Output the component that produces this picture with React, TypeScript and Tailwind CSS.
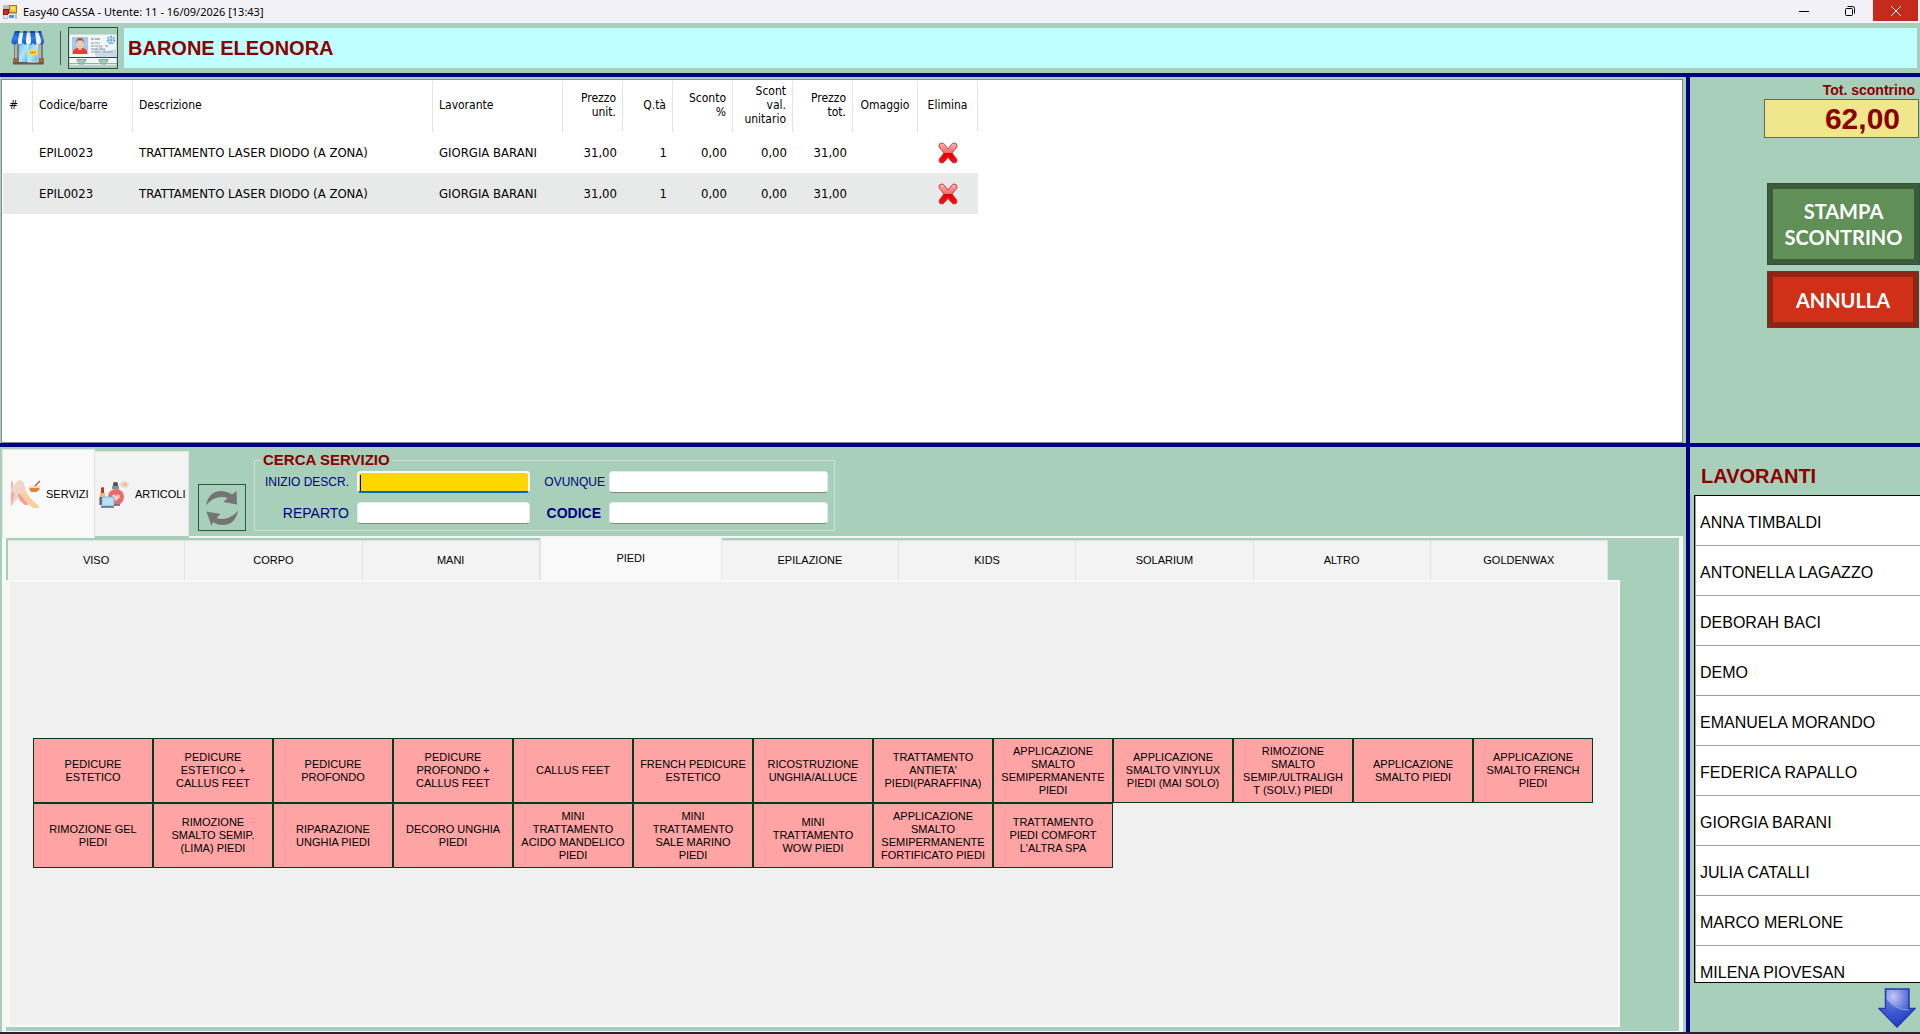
import { useId } from "react";

const arial = "font-['Liberation_Sans',Arial,sans-serif]";
const tahoma = "font-['DejaVu_Sans_Condensed',Tahoma,sans-serif]";

const receipt = [
  { id: 1, code: "EPIL0023", description: "TRATTAMENTO LASER DIODO (A ZONA)", worker: "GIORGIA BARANI", price: "31,00", qty: "1", discount: "0,00", unitDiscount: "0,00", total: "31,00" },
  { id: 2, code: "EPIL0023", description: "TRATTAMENTO LASER DIODO (A ZONA)", worker: "GIORGIA BARANI", price: "31,00", qty: "1", discount: "0,00", unitDiscount: "0,00", total: "31,00" },
];

const categories = ["VISO", "CORPO", "MANI", "PIEDI", "EPILAZIONE", "KIDS", "SOLARIUM", "ALTRO", "GOLDENWAX"];

const services = [
  "PEDICURE\nESTETICO",
  "PEDICURE\nESTETICO +\nCALLUS FEET",
  "PEDICURE\nPROFONDO",
  "PEDICURE\nPROFONDO +\nCALLUS FEET",
  "CALLUS FEET",
  "FRENCH PEDICURE\nESTETICO",
  "RICOSTRUZIONE\nUNGHIA/ALLUCE",
  "TRATTAMENTO\nANTIETA'\nPIEDI(PARAFFINA)",
  "APPLICAZIONE\nSMALTO\nSEMIPERMANENTE\nPIEDI",
  "APPLICAZIONE\nSMALTO VINYLUX\nPIEDI (MAI SOLO)",
  "RIMOZIONE\nSMALTO\nSEMIP./ULTRALIGH\nT (SOLV.) PIEDI",
  "APPLICAZIONE\nSMALTO PIEDI",
  "APPLICAZIONE\nSMALTO FRENCH\nPIEDI",
  "RIMOZIONE GEL\nPIEDI",
  "RIMOZIONE\nSMALTO SEMIP.\n(LIMA) PIEDI",
  "RIPARAZIONE\nUNGHIA PIEDI",
  "DECORO UNGHIA\nPIEDI",
  "MINI\nTRATTAMENTO\nACIDO MANDELICO\nPIEDI",
  "MINI\nTRATTAMENTO\nSALE MARINO\nPIEDI",
  "MINI\nTRATTAMENTO\nWOW PIEDI",
  "APPLICAZIONE\nSMALTO\nSEMIPERMANENTE\nFORTIFICATO PIEDI",
  "TRATTAMENTO\nPIEDI COMFORT\nL'ALTRA SPA",
];

const workers = [
  "ANNA TIMBALDI",
  "ANTONELLA LAGAZZO",
  "DEBORAH BACI",
  "DEMO",
  "EMANUELA MORANDO",
  "FEDERICA RAPALLO",
  "GIORGIA BARANI",
  "JULIA CATALLI",
  "MARCO MERLONE",
  "MILENA PIOVESAN",
];

function FormIcon() {
  return (
    <svg width="14" height="14" viewBox="0 0 14 14" aria-hidden="true">
      <rect width="14" height="14" fill="#b9bcc4" />
      <rect x="0.5" y="4.5" width="5" height="5" fill="#d8261c" stroke="#8f1510" />
      <rect x="6.5" y="0.5" width="7" height="7" fill="#f9c62c" stroke="#a8791a" />
      <rect x="8" y="2" width="4" height="2.5" fill="#ffe890" />
      <rect x="5.5" y="9.5" width="6" height="4" fill="#4d8df0" stroke="#e8eefc" />
      <rect x="1" y="10" width="3.500" height="3" fill="#e8e8ee" />
    </svg>
  );
}

function ShopIcon() {
  return (
    <svg width="34" height="36" viewBox="0 0 34 36" aria-hidden="true">
      <defs>
        <linearGradient id="awning" x1="0" x2="0" y1="0" y2="1">
          <stop offset="0" stopColor="#1c4fb0" />
          <stop offset="0.55" stopColor="#2f7fe0" />
          <stop offset="1" stopColor="#1a56c4" />
        </linearGradient>
        <linearGradient id="glass" x1="0" x2="1" y1="0" y2="1">
          <stop offset="0" stopColor="#5fc0ee" />
          <stop offset="0.5" stopColor="#b4e6fa" />
          <stop offset="1" stopColor="#55b4e6" />
        </linearGradient>
      </defs>
      <rect x="2" y="31" width="31" height="3.500" rx="1" fill="#6b5a48" />
      <rect x="3" y="12" width="5" height="20" fill="#7d7d7d" />
      <rect x="27" y="12" width="5" height="20" fill="#7d7d7d" />
      <rect x="4" y="13" width="2" height="18" fill="#b4b4b4" />
      <rect x="28" y="13" width="2" height="18" fill="#b4b4b4" />
      <rect x="2" y="28" width="6" height="4" fill="#9c6b3c" />
      <rect x="27" y="28" width="6" height="4" fill="#9c6b3c" />
      <rect x="8" y="13" width="9" height="19" fill="url(#glass)" />
      <rect x="17" y="13" width="10" height="19" fill="url(#glass)" stroke="#e9f6fc" strokeWidth="0.800" />
      <rect x="18" y="20" width="8" height="5" fill="#ffdb38" />
      <path d="M19 22.500h6" stroke="#e2661c" strokeWidth="1.500" strokeDasharray="1.500 .6" />
      <path d="M4 1h26l3 9v3q-3 3-6 0-3 3-5 0-2.500 3-5 0-2.500 3-5 0-3 3-5.500 0-3 3-6 0v-3z" fill="url(#awning)" />
      <path d="M9 1h3.500L11 10v3.500q-2 1.500-4 0V10zM16 1h3l1 9v3q-3 3-5 0v-3zM24 1h3l3 9v3q-3 2.500-5 0v-3z" fill="#edf4fd" />
      <path d="M4 1h26l.7 2H3.300z" fill="#123a8c" opacity="0.450" />
    </svg>
  );
}

function IdCardIcon() {
  return (
    <svg width="48" height="32" viewBox="0 0 48 32" aria-hidden="true">
      <rect x="0.500" y="0.500" width="47" height="30.500" rx="1.500" fill="#f3f6f8" stroke="#d3dbe0" />
      <path d="M24 15l8-3 6 5 9-2v8l-20 0z" fill="#bed3ea" opacity="0.800" />
      <rect x="3" y="3" width="16" height="17" fill="#a9c6ee" />
      <path d="M4 20v-2q0-3 4-4h6q4 1 4 4v2z" fill="#dc4438" />
      <rect x="9" y="12" width="4" height="4" fill="#e0ab88" />
      <ellipse cx="11" cy="9.500" rx="3.500" ry="4.500" fill="#f3c9a8" />
      <path d="M7 9q0-5 4-5t4 5l-1.500-2.500h-5z" fill="#8a6446" />
      <path d="M22 5h3m1 0h5" stroke="#9aa6b0" strokeWidth="1.500" />
      <path d="M22 9h9m-9 3h12m2 0h4m-18 3h7m2 0h5m-14 3h9m3 0h10" stroke="#8a949c" strokeDasharray="3 .8" />
      <circle cx="42" cy="6" r="3.500" fill="none" stroke="#5b9ad8" strokeWidth="1.500" strokeDasharray="2 1" />
      <path d="M42 3v6m-3-3h6" stroke="#5b9ad8" />
      <path d="M0 23.500h48" stroke="#3f4a4a" />
      <path d="M8 25.500h9v1.500l-2 1v2h-5v-2l-2-1zM30 25.500h9v1.500l-2 1v2h-5v-2l-2-1z" fill="#a0ccb6" stroke="#74a08c" strokeWidth="0.800" />
      <path d="M0 29.500h10m5 0h17m5 0h11" stroke="#8cb4a0" />
    </svg>
  );
}

function DeleteIcon() {
  return (
    <svg width="20" height="22" viewBox="0 0 20 22" aria-hidden="true">
      <defs>
        <linearGradient id="cross" x1="0" x2="0" y1="0" y2="1">
          <stop offset="0" stopColor="#fbb4b4" />
          <stop offset="0.480" stopColor="#f46c6c" />
          <stop offset="0.520" stopColor="#e40000" />
          <stop offset="1" stopColor="#e81818" />
        </linearGradient>
      </defs>
      <path
        d="M1 4q0-3 3-3 1.500 0 2.500 1.500L10 7l3.500-4.500Q14.500 1 16 1q3 0 3 3 0 1-1 2l-4 5 4 5q1 1 1 2.500 0 2.500-3 2.500-1.500 0-2.500-1.500L10 15.500l-3.500 4Q5.500 21 4 21q-3 0-3-2.500Q1 17 2 16l4-5-4-5Q1 5 1 4z"
        fill="url(#cross)"
        stroke="#d04040"
      />
    </svg>
  );
}

function LegsIcon() {
  return (
    <svg className="shrink-0" width="30" height="30" viewBox="0 0 30 30" aria-hidden="true">
      <path d="M1 2l2 1v5l-2 4z" fill="#f6b8a8" />
      <path d="M1 12Q5 2 10 1q4 1 5 7 2 7 8 15l5 5-1 1h-4q-8-5-13-13L7 20l-6 8z" fill="#f0d5c8" />
      <path d="M1 12l4 3-4 12z" fill="#f4aaa4" />
      <path d="M9 14l8 9 1 3h-3q-6-4-7-9z" fill="#f59c9c" />
      <path d="M13 12q8 8 16 15v2h-5q-9-6-13-13z" fill="#f9cf9c" />
      <path d="M19 7h11q0 5-4 6h-5q-2-2-2-6z" fill="#e8803c" />
      <path d="M19 7h11v2H19z" fill="#fbd9b0" />
      <path d="M25 7l5-5" stroke="#b06038" strokeWidth="1.500" />
    </svg>
  );
}

function CosmeticsIcon() {
  return (
    <svg className="shrink-0" width="30" height="28" viewBox="0 0 30 28" aria-hidden="true">
      <path d="M2 8q2-2 3 0v6H2z" fill="#c0303c" />
      <rect x="1" y="13" width="5" height="4" fill="#f0b860" />
      <rect x="0.500" y="17" width="6" height="8" fill="#5a5a62" />
      <rect x="14" y="2" width="5" height="5" rx="2" fill="#50545e" />
      <rect x="13" y="6" width="7" height="3" fill="#8a8e98" />
      <circle cx="17" cy="17" r="8" fill="#e86a6a" />
      <path d="M17 21l-4-4q0-3 2.500-2.500L17 16l1.500-1.500Q21 14 21 17z" fill="#fbd0c8" />
      <path d="M20 4q5-5 9-1 2 4-3 5-4 0-6-4z" fill="#ead9c0" />
      <circle cx="26" cy="4.500" r="1.500" fill="#f6b0a0" />
      <rect x="3" y="17" width="12" height="9" rx="1" fill="#b8e2fb" stroke="#78b4dc" />
      <path d="M2 27h13M15 25h6" stroke="#5f646c" strokeWidth="1.500" />
    </svg>
  );
}

function RefreshIcon() {
  return (
    <svg width="34" height="36" viewBox="0 0 34 36" fill="#747474" aria-hidden="true">
      <path d="M1 15.500C3 5 9 1 16 1q6 0 11 3.500L31.500 1 32 14.500 18.500 12l4-4C15 5.500 7 8 1 15.500z" />
      <path d="M33 20.500C31 31 25 35 18 35q-6 0-10-3l-1.500 4L1.500 21.500 15.500 24l-4 4C19 30.500 27 28 33 20.500z" />
    </svg>
  );
}

function ArrowDownIcon() {
  return (
    <svg width="38" height="40" viewBox="0 0 38 40" aria-hidden="true">
      <defs>
        <radialGradient id="arrowFill" cx="0.400" cy="0.200" r="0.800">
          <stop offset="0" stopColor="#c4c8f4" />
          <stop offset="0.500" stopColor="#5c70dc" />
          <stop offset="1" stopColor="#1c3cc0" />
        </radialGradient>
      </defs>
      <path d="M7.500 1h23.500v19.500h6L19 39 1 20.500h6.500z" fill="url(#arrowFill)" stroke="#2438b0" strokeWidth="1.500" />
      <path d="M8.500 10q8 12 27 12l-2 2L20 37.500 4 21.500h4.500z" fill="#1c40c4" opacity="0.450" />
      <path d="M8.500 10q8 12 22 12" fill="none" stroke="#b4bcf4" opacity="0.700" />
    </svg>
  );
}

function SearchField({ label, labelClass, active = false }: { label: string; labelClass: string; active?: boolean }) {
  const id = useId();
  return (
    <>
      <label htmlFor={id} className={`justify-self-end whitespace-nowrap text-[#000080] ${labelClass}`}>
        {label}
      </label>
      <div className="relative">
        <input
          id={id}
          type="text"
          className={
            active
              ? "block h-[22px] w-full rounded-sm border-2 border-[#f6fafc] border-b-[#0067c0] bg-[#ffd700] px-1 text-sm outline-none"
              : "block h-[22px] w-full rounded-sm border border-[#e4ece8] border-b-[#868686] bg-white px-1 text-sm outline-none"
          }
        />
        {active && <span className="absolute left-[3px] top-1 h-4 w-px bg-[#0000c0]" />}
      </div>
    </>
  );
}

const th = "border-r border-[#e4e4e4] px-1.5 pb-1 font-normal";
const td = "h-[41px] px-1.5";

function ReceiptTable() {
  return (
    <table className={`ml-px mt-px w-[975px] table-fixed border-separate border-spacing-0 text-black ${tahoma}`}>
      <colgroup>
        <col className="w-[30px]" />
        <col className="w-[100px]" />
        <col className="w-[300px]" />
        <col className="w-[130px]" />
        <col className="w-[60px]" />
        <col className="w-[50px]" />
        <col className="w-[60px]" />
        <col className="w-[60px]" />
        <col className="w-[60px]" />
        <col className="w-[65px]" />
        <col className="w-[60px]" />
      </colgroup>
      <thead className="text-[12px] leading-[14px]">
        <tr className="h-[51px]">
          <th className={`${th} text-left`}>#</th>
          <th className={`${th} text-left`}>Codice/barre</th>
          <th className={`${th} text-left`}>Descrizione</th>
          <th className={`${th} text-left`}>Lavorante</th>
          <th className={`${th} text-right`}>Prezzo<br />unit.</th>
          <th className={`${th} text-right`}>Q.tà</th>
          <th className={`${th} text-right`}>Sconto<br />%</th>
          <th className={`${th} text-right`}>Scont<br />val.<br />unitario</th>
          <th className={`${th} text-right`}>Prezzo<br />tot.</th>
          <th className={`${th} text-center`}>Omaggio</th>
          <th className={`${th} text-center`}>Elimina</th>
        </tr>
      </thead>
      <tbody className="text-[13px] leading-4">
        {receipt.map((row) => (
          <tr key={row.id} className="even:bg-[#e8eae9]">
            <td className={td} />
            <td className={td}>{row.code}</td>
            <td className={`${td} whitespace-nowrap`}>{row.description}</td>
            <td className={`${td} whitespace-nowrap`}>{row.worker}</td>
            <td className={`${td} text-right`}>{row.price}</td>
            <td className={`${td} text-right`}>{row.qty}</td>
            <td className={`${td} text-right`}>{row.discount}</td>
            <td className={`${td} text-right`}>{row.unitDiscount}</td>
            <td className={`${td} text-right`}>{row.total}</td>
            <td className={td} />
            <td className={td}>
              <button type="button" aria-label="Elimina" className="mx-auto block">
                <DeleteIcon />
              </button>
            </td>
          </tr>
        ))}
      </tbody>
    </table>
  );
}

function TitleBar() {
  return (
    <header className="flex h-[23px] shrink-0 items-start justify-between bg-[#f3f1f8] font-['Noto_Sans','Segoe_UI',sans-serif]">
      <div className="flex h-[23px] items-center gap-1.5 pl-[3px]">
        <FormIcon />
        <h1 className="text-[11px] leading-4 text-black">Easy40 CASSA - Utente: 11 - 16/09/2026 [13:43]</h1>
      </div>
      <div className="flex h-[21px] pr-0.5">
        <button type="button" aria-label="Riduci" className="flex w-[46px] items-center justify-center">
          <svg width="10" height="10" viewBox="0 0 10 10"><path d="M0 5.500h10" stroke="#000" /></svg>
        </button>
        <button type="button" aria-label="Ripristina" className="flex w-[46px] items-center justify-center">
          <svg width="10" height="10" viewBox="0 0 10 10" fill="none" stroke="#000">
            <rect x="0.500" y="2.500" width="7" height="7" rx="1" />
            <path d="M2.500 .5h5q2 0 2 2v5" />
          </svg>
        </button>
        <button type="button" aria-label="Chiudi" className="flex w-[45px] items-center justify-center bg-[#c42b1c]">
          <svg width="10" height="10" viewBox="0 0 10 10"><path d="M0 0l10 10M10 0L0 10" stroke="#fff" /></svg>
        </button>
      </div>
    </header>
  );
}

function CustomerBar() {
  return (
    <div className="flex h-[50px] shrink-0 items-center pl-[11px] pr-[3px]">
      <button type="button" aria-label="Negozio">
        <ShopIcon />
      </button>
      <div className="ml-[15px] h-[34px] w-px bg-[#4a5a50]" />
      <button type="button" aria-label="Scheda cliente" className="ml-[7px] flex h-[42px] w-[50px] items-end justify-center border border-[#2f5040] pb-0.5">
        <IdCardIcon />
      </button>
      <div className={`ml-1.5 flex h-10 flex-1 items-center bg-[#c0ffff] pl-1 text-[20px] font-bold text-[#8b0000] ${arial}`}>
        BARONE ELEONORA
      </div>
    </div>
  );
}

function Totals() {
  return (
    <aside className="flex w-[234px] shrink-0 flex-col items-end border-l-4 border-[#000080] pt-1">
      <label htmlFor="total" className={`pr-[5px] text-[14px] font-bold leading-[18px] text-[#8b0000] ${arial}`}>
        Tot. scontrino
      </label>
      <input
        id="total"
        readOnly
        value="62,00"
        className={`mr-px h-[39px] w-[155px] border border-[#646464] bg-[#f0e68c] pr-[18px] text-right text-[30px] font-bold text-[#8b0000] outline-none ${arial}`}
      />
      <button
        type="button"
        className="mt-[45px] h-[82px] w-[153px] border border-[#2c5440] bg-[#3c5a38] p-[5px] font-['Lato',Calibri,sans-serif] text-[20px] font-bold leading-[26px] text-white"
      >
        <span className="flex h-full items-center justify-center bg-[#609058]">
          STAMPA
          <br />
          SCONTRINO
        </span>
      </button>
      <button
        type="button"
        className="mr-px mt-1.5 h-[57px] w-[152px] border border-[#2c5440] bg-[#902414] p-[5px] font-['Lato',Calibri,sans-serif] text-[20px] font-bold leading-[26px] text-white"
      >
        <span className="flex h-full items-center justify-center bg-[#d03018]">ANNULLA</span>
      </button>
    </aside>
  );
}

function SearchBar() {
  return (
    <div className="flex h-[91px] shrink-0 items-end pl-0.5">
      <div role="tablist" className={`flex items-end self-end text-[11px] text-black ${arial}`}>
        <button type="button" role="tab" aria-selected="true" className="flex h-[89px] w-[93px] items-center gap-1.5 border-x border-t border-[#e4e4e4] bg-[#f9f9f9] pl-[7px]">
          <LegsIcon />
          SERVIZI
        </button>
        <button type="button" role="tab" aria-selected="false" className="mb-0.5 flex h-[85px] w-[94px] items-center gap-1.5 border-r border-t border-[#e4e4e4] bg-[#f3f3f3] pl-1">
          <CosmeticsIcon />
          ARTICOLI
        </button>
      </div>
      <div className="flex h-full flex-1 items-end border-b-2 border-[#f4f6f5] pb-[5px]">
        <button type="button" aria-label="Aggiorna" className="ml-[9px] flex h-[47px] w-12 items-center justify-center border border-[#2c5440]">
          <RefreshIcon />
        </button>
        <fieldset className={`ml-2 w-[581px] border border-[#d8dcda] px-1.5 pb-1.5 ${arial}`}>
          <legend className="px-[2px] text-[15px] font-bold leading-4 text-[#8b0000]">CERCA SERVIZIO</legend>
          <div className="grid grid-cols-[96px_173px_79px_219px] items-center gap-y-[9px] pt-[3px]">
            <SearchField label="INIZIO DESCR." labelClass="pr-2 text-[12px]" active />
            <SearchField label="OVUNQUE" labelClass="pr-1 text-[12px]" />
            <SearchField label="REPARTO" labelClass="pr-2 text-[14px]" />
            <SearchField label="CODICE" labelClass="pr-2 text-[14px] font-bold" />
          </div>
        </fieldset>
      </div>
    </div>
  );
}

function ServicePanel() {
  return (
    <section className="flex min-w-0 flex-1 flex-col pr-[3px]">
      <SearchBar />
      <div className="ml-0.5 flex flex-1 flex-col border-b border-l-4 border-r-4 border-[#f6f7f6] pb-1">
        <div role="tablist" className={`ml-0.5 flex h-[42px] shrink-0 items-end pr-[71px] text-[11px] text-black ${arial}`}>
          {categories.map((name) =>
            name === "PIEDI" ? (
              <button key={name} type="button" role="tab" aria-selected="true" className="h-[42px] w-[182px] shrink-0 border-x border-[#e4e4e4] bg-[#f9f9f9] pb-0.5">
                {name}
              </button>
            ) : (
              <button key={name} type="button" role="tab" aria-selected="false" className="h-10 min-w-0 flex-1 border-r border-t border-[#e2e2e2] bg-[#f3f3f3]">
                {name}
              </button>
            ),
          )}
        </div>
        <div role="tabpanel" className="mr-[59px] flex flex-1 flex-col border-y-2 border-l-4 border-r-2 border-[#f9f9f9] bg-[#f0f0f0] pl-[23px] pr-[25px] pt-[156px]">
          <div className="grid grid-cols-[repeat(auto-fill,120px)]">
            {services.map((name) => (
              <button
                key={name}
                type="button"
                className={`h-[65px] whitespace-pre-line border border-[#003c20] bg-[#ffa4a4] text-center text-[11px] leading-[13px] text-black ${arial}`}
              >
                {name}
              </button>
            ))}
          </div>
        </div>
      </div>
    </section>
  );
}

function WorkersPanel() {
  return (
    <aside className={`flex w-[234px] shrink-0 flex-col border-l-4 border-[#000080] ${arial}`}>
      <h2 className="pl-[11px] pt-[17px] text-[20px] font-bold leading-6 text-[#8b0000]">LAVORANTI</h2>
      <ul className="ml-1 mt-[7px] h-0 flex-1 overflow-hidden border-y border-l border-black bg-white">
        {workers.map((name) => (
          <li key={name} className="border-b border-l border-[#a0a0a0]">
            <button type="button" className="block h-[49px] w-full pl-1 pt-1 text-left text-[16px] text-black">
              {name}
            </button>
          </li>
        ))}
      </ul>
      <div className="flex h-[49px] shrink-0 items-center justify-end pr-1">
        <button type="button" aria-label="Scorri in basso">
          <ArrowDownIcon />
        </button>
      </div>
    </aside>
  );
}

export default function App() {
  return (
    <div className="flex h-screen flex-col overflow-hidden border-b-2 border-[#2a2038] bg-[#a8cfba]">
      <TitleBar />
      <CustomerBar />
      <main className="flex min-h-0 flex-1 flex-col">
        <div className="flex h-[374px] shrink-0 border-y-4 border-[#000080]">
          <section className="min-w-0 flex-1 pl-px pr-[3px] pt-0.5">
            <div className="h-full border border-[#848c90] bg-white">
              <ReceiptTable />
            </div>
          </section>
          <Totals />
        </div>
        <div className="flex min-h-0 flex-1">
          <ServicePanel />
          <WorkersPanel />
        </div>
      </main>
    </div>
  );
}
